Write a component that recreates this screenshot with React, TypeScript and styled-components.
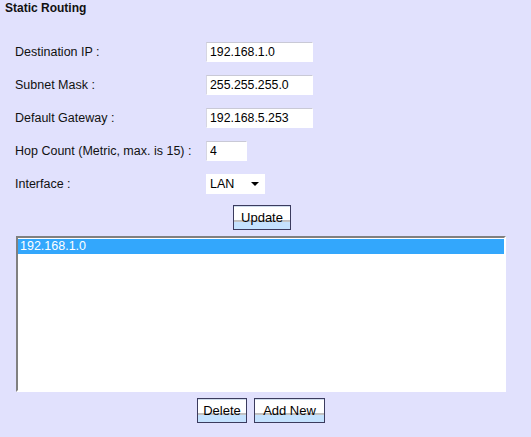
import React from "react";
import styled, { createGlobalStyle } from "styled-components";

const Global = createGlobalStyle`
  html, body {
    margin: 0;
    padding: 0;
    background: #e1e1fd;
  }
  body {
    font-family: Arial, "Liberation Sans", sans-serif;
    color: #000;
  }
`;

const Page = styled.div`
  width: 531px;
  height: 437px;
  background: #e1e1fd;
  padding-top: 1px;
  box-sizing: border-box;
`;

const Title = styled.div`
  font-size: 12px;
  font-weight: bold;
  line-height: 15px;
  padding-left: 5px;
  color: #111;
`;

const Form = styled.div`
  display: grid;
  grid-template-columns: 191px auto;
  grid-auto-rows: 20px;
  row-gap: 13px;
  align-items: center;
  padding-left: 15px;
  margin-top: 26px;
`;

const Label = styled.div`
  font-size: 12.5px;
  line-height: 20px;
  color: #111;
`;

const Field = styled.input<{ $w: number }>`
  width: ${(p) => p.$w}px;
  height: 20px;
  box-sizing: border-box;
  border: 1px solid #ffffff;
  border-top-color: #c9c9d6;
  border-left-color: #d6d6e2;
  background: #fff;
  font-family: Arial, "Liberation Sans", sans-serif;
  font-size: 12.3px;
  color: #000;
  padding: 0 0 0 3px;
  margin: 0;
  outline: none;
`;

const SelectBox = styled.div`
  width: 59px;
  height: 20px;
  box-sizing: border-box;
  background: #fff;
  display: flex;
  align-items: center;
  justify-content: space-between;
  padding: 0 6px 0 4px;
  font-size: 12.5px;
`;

const Caret = styled.span`
  width: 0;
  height: 0;
  border-left: 4px solid transparent;
  border-right: 4px solid transparent;
  border-top: 4px solid #000;
`;

const Section = styled.div`
  width: 490px;
  margin-left: 16px;
  display: flex;
  flex-direction: column;
  align-items: center;
`;

const ButtonRow = styled.div<{ $top: number; $shift?: number }>`
  display: flex;
  justify-content: center;
  gap: 7px;
  margin-top: ${(p) => p.$top}px;
  padding-left: ${(p) => p.$shift ?? 0}px;
`;

const Btn = styled.button<{ $w: number }>`
  width: ${(p) => p.$w}px;
  height: 25px;
  box-sizing: border-box;
  border: 1px solid #3b3b5e;
  padding: 0;
  margin: 0;
  font-family: Arial, "Liberation Sans", sans-serif;
  font-size: 13px;
  color: #000;
  line-height: 23px;
  background: linear-gradient(
    to bottom,
    #cfdcec 0px,
    #cfdcec 1px,
    #ffffff 1px,
    #ffffff 14px,
    #bdbdbd 14px,
    #c6c6c6 16px,
    #c5e2fe 16px,
    #c5e2fe 100%
  );
`;

const ListBox = styled.div`
  width: 490px;
  height: 156px;
  box-sizing: border-box;
  margin-top: 6px;
  background: #fff;
  border-top: 2px solid #808080;
  border-left: 2px solid #808080;
  border-right: 2px solid #ffffff;
  border-bottom: 2px solid #ffffff;
  padding-top: 1px;
`;

const Option = styled.div<{ $selected?: boolean }>`
  height: 15px;
  line-height: 15px;
  font-size: 12.5px;
  padding-left: 2px;
  background: ${(p) => (p.$selected ? "#33a7fc" : "transparent")};
  color: ${(p) => (p.$selected ? "#fff" : "#000")};
`;

export default function App() {
  return (
    <Page>
      <Global />
      <Title>Static Routing</Title>
      <Form>
        <Label>Destination IP :</Label>
        <Field $w={107} defaultValue="192.168.1.0" />
        <Label>Subnet Mask :</Label>
        <Field $w={107} defaultValue="255.255.255.0" />
        <Label>Default Gateway :</Label>
        <Field $w={107} defaultValue="192.168.5.253" />
        <Label>Hop Count (Metric, max. is 15) :</Label>
        <Field $w={41} defaultValue="4" />
        <Label>Interface :</Label>
        <SelectBox>
          <span>LAN</span>
          <Caret />
        </SelectBox>
      </Form>
      <Section>
        <ButtonRow $top={11} $shift={2}>
          <Btn $w={58}>Update</Btn>
        </ButtonRow>
        <ListBox>
          <Option $selected>192.168.1.0</Option>
        </ListBox>
        <ButtonRow $top={6}>
          <Btn $w={50}>Delete</Btn>
          <Btn $w={71}>Add New</Btn>
        </ButtonRow>
      </Section>
    </Page>
  );
}
